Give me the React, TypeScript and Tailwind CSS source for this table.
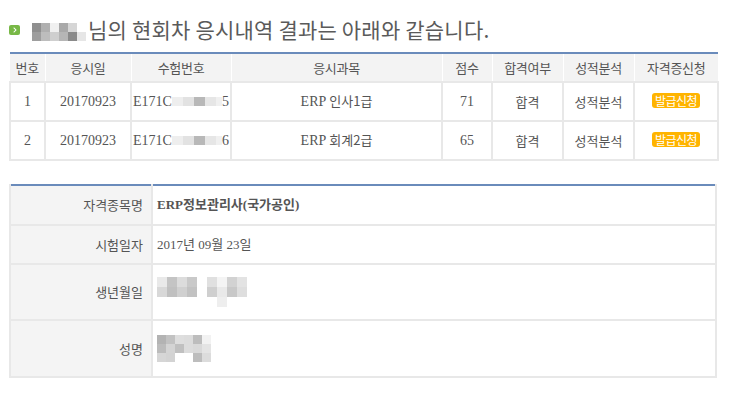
import { FaChevronRight } from "react-icons/fa";

// pixelated placeholder used where personal data is masked
const Mosaic = ({ cells, cols, size }: { cells: string[]; cols: number; size: number }) => {
  return (
    <div
      className="inline-grid align-middle"
      style={{ gridTemplateColumns: `repeat(${cols}, ${size}px)`, gridAutoRows: `${size}px` }}
    >
      {cells.map((c, i) => (
        <div key={i} style={{ backgroundColor: c }} />
      ))}
    </div>
  );
};

const nameMask = [
  "#8f8f8f", "#b0b0b0", "#f0f0f0", "#a9a9a9", "#d6d6d6", "#ffffff",
  "#9e9e9e", "#bdbdbd", "#cfcfcf", "#b6b6b6", "#8a8a8a", "#e6e6e6",
];
const birthMask = [
  "#e9e9e9", "#c4c4c4", "#dcdcdc", "#c9c9c9", "#ffffff", "#e0e0e0", "#f4f4f4", "#d2d2d2", "#e3e3e3",
  "#d8d8d8", "#c0c0c0", "#d0d0d0", "#c2c2c2", "#ffffff", "#cfcfcf", "#e9e9e9", "#c8c8c8", "#dedede",
  "#ffffff", "#ffffff", "#ffffff", "#ffffff", "#ffffff", "#ffffff", "#eeeeee", "#ffffff", "#ffffff",
];
const userMask = [
  "#b3b3b3", "#c2c2c2", "#dedede", "#dcdcdc", "#bdbdbd", "#f2f2f2",
  "#bcbcbc", "#d4d4d4", "#c0c0c0", "#dcdcdc", "#d9d9d9", "#e4e4e4",
  "#d6d6d6", "#d3d3d3", "#ffffff", "#ffffff", "#bdbdbd", "#dcdcdc",
];

const rows = [
  { no: "1", date: "20170923", pre: "E171C", post: "5", subject: "ERP 인사1급", score: "71" },
  { no: "2", date: "20170923", pre: "E171C", post: "6", subject: "ERP 회계2급", score: "65" },
];

const heads = ["번호", "응시일", "수험번호", "응시과목", "점수", "합격여부", "성적분석", "자격증신청"];
const widths = ["w-[35px]", "w-[86px]", "w-[100px]", "w-[211px]", "w-[50px]", "w-[71px]", "w-[71px]", "w-[84px]"];

const serif = '"Liberation Serif", "Noto Sans CJK KR", serif';
const sans = '"Noto Sans CJK KR", "Noto Sans", sans-serif';

const App = () => {
  const td = "border-2 border-[#e8e8e8] text-center h-[39px] p-0";
  return (
    <div className="w-[750px] h-[395px] bg-white text-[#555] overflow-hidden" style={{ fontFamily: sans }}>
      <div className="flex items-center pl-[9px] pt-[16px] h-[43px]">
        <span className="w-[11px] h-[10px] rounded-[2px] bg-[#78b846] flex items-center justify-center text-white">
          <FaChevronRight className="text-[6px]" />
        </span>
        <span className="ml-[12px]">
          <Mosaic cells={nameMask} cols={6} size={9} />
        </span>
        <h1 className="ml-[2px] text-[21px] leading-none tracking-[0.2px] text-[#5a5a5a] font-normal">
          님의 현회차 응시내역 결과는 아래와 같습니다.
        </h1>
      </div>

      <table className="ml-[9px] mt-[9px] w-[708px] border-collapse table-fixed border-t-2 border-t-[#6a8bbb] text-[13px]">
        <colgroup>
          {widths.map((w, i) => (
            <col key={i} className={w} />
          ))}
        </colgroup>
        <thead>
          <tr className="bg-[#f3f3f3] h-[29px]">
            {heads.map((h, i) => (
              <th key={i} className="font-normal text-[#555] border-l border-white first:border-l-0 p-0 tracking-[-0.3px]">
                {h}
              </th>
            ))}
          </tr>
        </thead>
        <tbody className="text-[14px]" style={{ fontFamily: serif }}>
          {rows.map((r) => (
            <tr key={r.no}>
              <td className={td}>{r.no}</td>
              <td className={td}>{r.date}</td>
              <td className={td}>
                <span className="inline-flex items-center">
                  {r.pre}
                  <span className="inline-block w-[11px] h-[9px] bg-[#eeeeee]" />
                  <span className="inline-block w-[11px] h-[9px] bg-[#e2e2e2]" />
                  <span className="inline-block w-[11px] h-[9px] bg-[#b8b8b8]" />
                  <span className="inline-block w-[11px] h-[9px] bg-[#e6e6e6]" />
                  <span className="inline-block w-[6px] h-[9px] bg-[#f0f0f0]" />
                  {r.post}
                </span>
              </td>
              <td className={td}>
                ERP <span className="text-[13px]" style={{ fontFamily: sans }}>{r.subject.slice(4)}</span>
              </td>
              <td className={td}>{r.score}</td>
              <td className={`${td} text-[13px]`} style={{ fontFamily: sans }}>합격</td>
              <td className={`${td} text-[13px]`} style={{ fontFamily: sans }}>성적분석</td>
              <td className={td}>
                <span
                  className="inline-block bg-[#ffb400] text-white text-[12px] leading-[15px] px-[3px] rounded-[3px] tracking-[-0.5px]"
                  style={{ fontFamily: sans }}
                >
                  발급신청
                </span>
              </td>
            </tr>
          ))}
        </tbody>
      </table>

      <table className="ml-[9px] mt-[23px] w-[708px] border-collapse table-fixed border-t-2 border-t-[#6a8bbb] text-[13px]">
        <colgroup>
          <col className="w-[142px]" />
          <col />
        </colgroup>
        <tbody>
          <tr className="h-[40px]">
            <th className="bg-[#f4f4f4] font-normal text-right pr-[8px] border-2 border-[#e8e8e8] border-t-0">자격종목명</th>
            <td className="pl-[4px] border-2 border-[#e8e8e8] border-t-0 font-bold" style={{ fontFamily: serif }}>
              ERP정보관리사(국가공인)
            </td>
          </tr>
          <tr className="h-[39px]">
            <th className="bg-[#f4f4f4] font-normal text-right pr-[8px] border-2 border-[#e8e8e8]">시험일자</th>
            <td className="pl-[4px] border-2 border-[#e8e8e8]" style={{ fontFamily: serif }}>
              2017년 09월 23일
            </td>
          </tr>
          <tr className="h-[56px]">
            <th className="bg-[#f4f4f4] font-normal text-right pr-[8px] border-2 border-[#e8e8e8]">생년월일</th>
            <td className="pl-[4px] border-2 border-[#e8e8e8]">
              <Mosaic cells={birthMask} cols={9} size={10} />
            </td>
          </tr>
          <tr className="h-[57px]">
            <th className="bg-[#f4f4f4] font-normal text-right pr-[8px] border-2 border-[#e8e8e8]">성명</th>
            <td className="pl-[4px] border-2 border-[#e8e8e8]">
              <Mosaic cells={userMask} cols={6} size={9} />
            </td>
          </tr>
        </tbody>
      </table>
    </div>
  );
};

export default App;
